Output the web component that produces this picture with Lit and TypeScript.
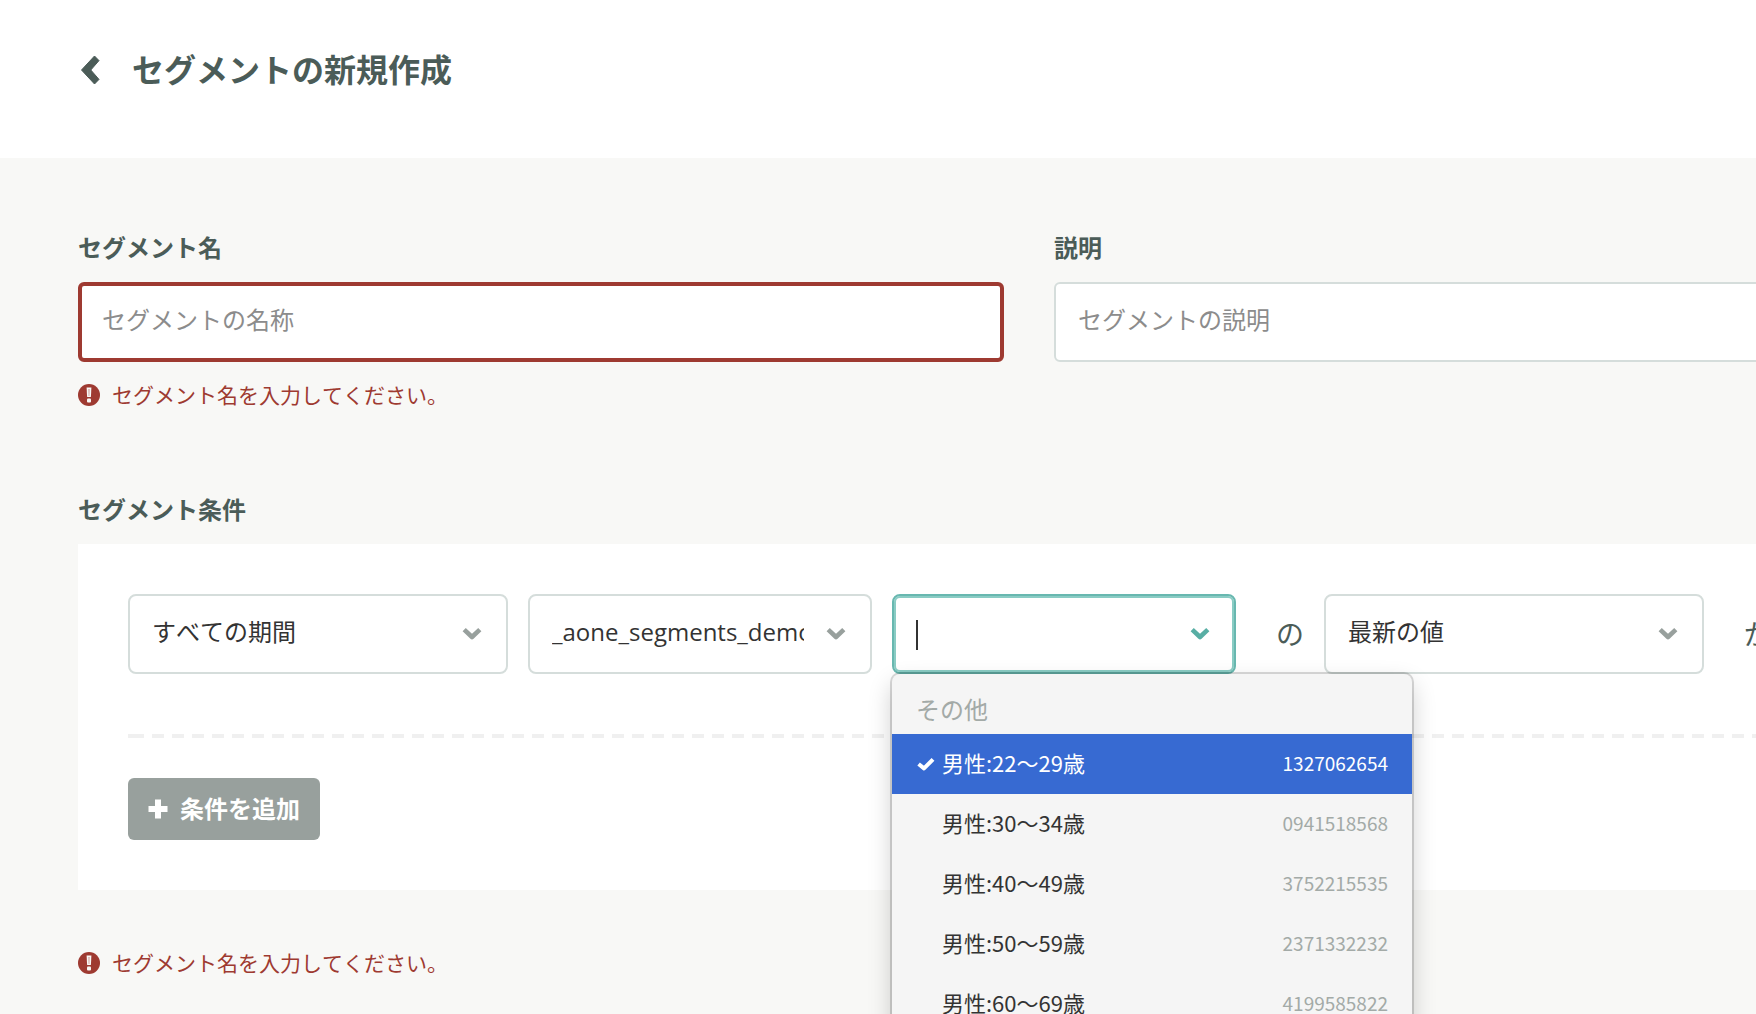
import { LitElement, html, css, svg, nothing } from "lit";
import { customElement, state } from "lit/decorators.js";

interface Candidate {
  label: string;
  id: string;
}

const CANDIDATES: Candidate[] = [
  { label: "男性:22〜29歳", id: "1327062654" },
  { label: "男性:30〜34歳", id: "0941518568" },
  { label: "男性:40〜49歳", id: "3752215535" },
  { label: "男性:50〜59歳", id: "2371332232" },
  { label: "男性:60〜69歳", id: "4199585822" },
];

const chevronDown = html`<svg class="chevron" viewBox="0 0 20 14" aria-hidden="true">
  <path d="M2.2 2.6 L10 10 L17.8 2.6" fill="none" stroke="currentColor" stroke-width="4.6" stroke-linejoin="round" />
</svg>`;

@customElement("app-root")
export class AppRoot extends LitElement {
  @state() private selected = 0;

  static styles = css`
    :host {
      display: block;
      font-family: "Open Sans", "Noto Sans CJK JP", sans-serif;
      font-size: 24px;
      line-height: 36px;
      font-kerning: none;
      color: #4b5c58;
    }
    * {
      box-sizing: border-box;
    }
    .page {
      min-height: 100vh;
      max-height: 100vh;
      overflow: hidden;
      background: #f8f8f6;
    }
    .header {
      display: flex;
      align-items: center;
      gap: 32px;
      padding: 46px 80px 64px;
      background: #fff;
    }
    .back {
      display: flex;
      padding: 0;
      border: 0;
      background: none;
      color: inherit;
    }
    .back svg {
      width: 20px;
      height: 30px;
    }
    h1 {
      margin: 0;
      font-size: 32px;
      line-height: 48px;
      font-weight: 700;
    }
    .content {
      padding: 72px 78px;
    }
    .fields {
      display: grid;
      grid-template-columns: repeat(2, minmax(926px, 1fr));
      gap: 50px;
    }
    .label {
      display: block;
      margin: 0;
      padding-bottom: 16px;
      font-size: 24px;
      line-height: 36px;
      font-weight: 700;
    }
    .text {
      display: block;
      width: 100%;
      height: 80px;
      padding: 0 22px 6px;
      border: 2px solid #d5dddb;
      border-radius: 6px;
      background: #fff;
      color: #333;
      font: inherit;
      outline: none;
    }
    .text.invalid {
      padding: 0 20px 6px;
      border: 4px solid #9e3a31;
    }
    .text::placeholder {
      color: #8c8c8c;
      opacity: 1;
    }
    .error {
      display: flex;
      align-items: center;
      gap: 12px;
      margin: 0;
      padding-top: 17px;
      font-size: 21px;
      line-height: 32px;
      color: #9e3a31;
    }
    .error svg {
      width: 22px;
      height: 22px;
    }
    .conditions {
      padding-top: 81px;
    }
    .panel {
      width: max-content;
      min-width: 100%;
      padding: 50px;
      background: #fff;
    }
    .row {
      display: flex;
      align-items: center;
      gap: 20px;
    }
    .particle {
      padding-left: 20px;
      font-size: 28px;
      line-height: 40px;
    }
    .picker {
      position: relative;
      display: grid;
      grid-template-columns: 1fr 26px;
      align-items: center;
      width: 344px;
      color: #98a09d;
    }
    .picker.wide {
      width: 380px;
    }
    .picker > .control {
      grid-area: 1 / 1 / 2 / 3;
    }
    .picker > .chevron {
      grid-area: 1 / 2;
      width: 20px;
      height: 14px;
      margin-left: -20px;
      pointer-events: none;
    }
    .control {
      width: 100%;
      height: 80px;
      padding: 0 66px 4px 22px;
      border: 2px solid #d5dddb;
      border-radius: 8px;
      background: #fff;
      color: #333;
      font: inherit;
      font-kerning: none;
      appearance: none;
      outline: none;
      text-overflow: clip;
    }
    .picker.active {
      color: #58aea4;
    }
    .active > .control {
      border-color: #68b8b0;
      box-shadow: inset 0 0 0 2px #8accc4;
      caret-color: transparent;
    }
    .caret {
      position: absolute;
      left: 24px;
      top: 26px;
      width: 2px;
      height: 30px;
      background: #333;
    }
    .menu {
      position: absolute;
      z-index: 1;
      top: 80px;
      left: 0;
      width: 520px;
      border-radius: 8px;
      background: #f5f5f5;
      box-shadow: 0 0 0 2px rgba(0, 0, 0, 0.15), 0 10px 24px rgba(0, 0, 0, 0.2);
    }
    .group {
      padding: 18px 24px 6px;
      color: #a3aaa7;
    }
    .option {
      display: grid;
      grid-template-columns: 18px 1fr auto;
      align-items: center;
      gap: 8px;
      width: 100%;
      height: 60px;
      padding: 0 24px;
      border: 0;
      background: none;
      font: inherit;
      font-family: "Noto Sans CJK JP", sans-serif;
      font-size: 22px;
      font-kerning: none;
      color: #333;
      text-align: left;
    }
    .option svg {
      width: 20px;
      height: 16px;
    }
    .option .name {
      padding-bottom: 4px;
    }
    .option .id {
      padding-bottom: 2px;
      font-size: 19px;
      color: #a3aaa7;
    }
    .option.on,
    .option.on .id {
      background: #376ad2;
      color: #fff;
    }
    .rule {
      height: 4px;
      margin: 60px 0 40px;
      background:
        linear-gradient(#f0f0f0, #f0f0f0) 0 0 / 16px 4px no-repeat,
        repeating-linear-gradient(to right, transparent 0 4px, #f0f0f0 4px 16px, transparent 16px 20px);
    }
    .add {
      display: flex;
      align-items: center;
      gap: 12px;
      height: 62px;
      padding: 0 20px;
      border: 0;
      border-radius: 6px;
      background: #98a09d;
      color: #fff;
      font: inherit;
      font-kerning: none;
      font-weight: 700;
    }
    .add svg {
      width: 20px;
      height: 20px;
    }
    .footer {
      padding-top: 40px;
    }
  `;

  private error() {
    return html`<p class="error" role="alert">
      <svg viewBox="0 0 22 22" aria-hidden="true">
        <circle cx="11" cy="11" r="11" fill="currentColor" />
        <path d="M8.6 3.6 H13.4 L12.9 13 H9.1 Z" fill="#f8f8f6" />
        <path d="M10.2 5 H11.8 L11.5 12 H10.5 Z" fill="#d9b3ae" />
        <rect x="9" y="14.4" width="4" height="4" rx="1" fill="#f8f8f6" />
      </svg>
      <span>セグメント名を入力してください。</span>
    </p>`;
  }

  private option(item: Candidate, index: number) {
    const on = index === this.selected;
    return html`<button
      class="option ${on ? "on" : ""}"
      type="button"
      role="option"
      aria-selected=${on}
      @click=${() => (this.selected = index)}
    >
      <svg viewBox="0 0 20 16" aria-hidden="true">
        ${on ? svg`<path d="M2.6 8 L8 12.4 L17 3.4" fill="none" stroke="currentColor" stroke-width="4" stroke-linejoin="round" />` : nothing}
      </svg>
      <span class="name">${item.label}</span>
      <span class="id">${item.id}</span>
    </button>`;
  }

  render() {
    return html`<div class="page">
      <header class="header">
        <button class="back" type="button" aria-label="戻る">
          <svg viewBox="0 0 20 30" aria-hidden="true">
            <path d="M1.5 15 L14.5 1 L19 5.6 L10.8 15 L19 24.4 L14.5 29 Z" fill="currentColor" stroke="currentColor" stroke-linejoin="round" />
          </svg>
        </button>
        <h1>セグメントの新規作成</h1>
      </header>
      <main class="content">
        <div class="fields">
          <div>
            <label class="label" for="name">セグメント名</label>
            <input id="name" class="text invalid" type="text" placeholder="セグメントの名称" aria-invalid="true" />
            ${this.error()}
          </div>
          <div>
            <label class="label" for="description">説明</label>
            <input id="description" class="text" type="text" placeholder="セグメントの説明" />
          </div>
        </div>
        <section class="conditions">
          <h2 class="label">セグメント条件</h2>
          <div class="panel">
            <div class="row">
              <div class="picker wide">
                <select class="control" aria-label="期間"><option>すべての期間</option></select>
                ${chevronDown}
              </div>
              <div class="picker">
                <select class="control" aria-label="テーブル"><option>_aone_segments_demo</option></select>
                ${chevronDown}
              </div>
              <div class="picker active">
                <input class="control" type="text" role="combobox" aria-label="項目" aria-expanded="true" aria-controls="candidates" />
                ${chevronDown}
                <span class="caret"></span>
                <div id="candidates" class="menu" role="listbox" aria-label="項目の候補">
                  <div class="group">その他</div>
                  ${CANDIDATES.map((item, index) => this.option(item, index))}
                </div>
              </div>
              <span class="particle">の</span>
              <div class="picker wide">
                <select class="control" aria-label="値"><option>最新の値</option></select>
                ${chevronDown}
              </div>
              <span class="particle">が</span>
            </div>
            <div class="rule"></div>
            <button class="add" type="button">
              <svg viewBox="0 0 20 20" aria-hidden="true">
                <path d="M10 0.5 V19.5 M0.5 10 H19.5" stroke="currentColor" stroke-width="6" />
              </svg>
              条件を追加
            </button>
          </div>
        </section>
        <div class="footer">${this.error()}</div>
      </main>
    </div>`;
  }
}
